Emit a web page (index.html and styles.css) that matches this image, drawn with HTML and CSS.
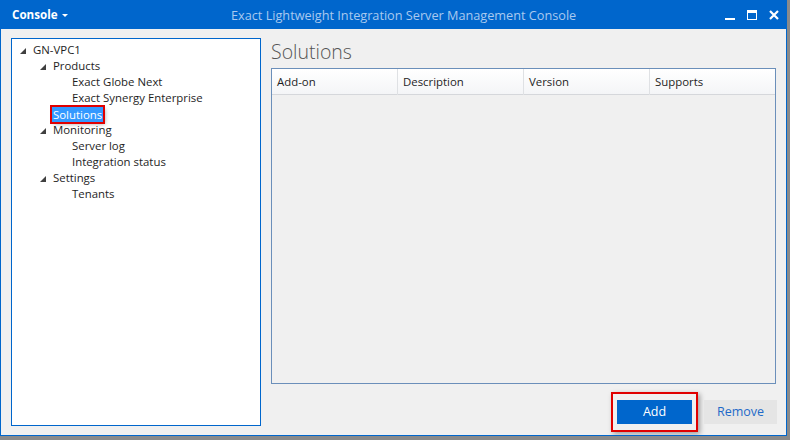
FILE: index.html
```html
<!DOCTYPE html>
<html>
<head>
<meta charset="utf-8">
<link rel="stylesheet" href="styles.css">
</head>
<body>
<div class="window">
  <div class="titlebar">
    <div class="menu">Console <span class="caret"></span></div>
    <div class="title">Exact Lightweight Integration Server Management Console</div>
    <div class="controls">
      <svg width="10" height="10" viewBox="0 0 10 10"><rect x="0" y="8" width="10" height="2" fill="#fff"/></svg>
      <svg width="10" height="10" viewBox="0 0 10 10"><rect x="0.5" y="0.5" width="9" height="9" fill="none" stroke="#fff" stroke-width="1"/><rect x="0" y="0" width="10" height="3" fill="#fff"/></svg>
      <svg width="10" height="10" viewBox="0 0 10 10"><path d="M1 1 L9 9 M9 1 L1 9" stroke="#fff" stroke-width="2.2"/></svg>
    </div>
  </div>
  <div class="body">
    <div class="tree">
      <div class="node l0"><span class="tri"></span>GN-VPC1</div>
      <div class="node l1"><span class="tri"></span>Products</div>
      <div class="node l2">Exact Globe Next</div>
      <div class="node l2">Exact Synergy Enterprise</div>
      <div class="node l1s"><span class="sel">Solutions</span></div>
      <div class="node l1"><span class="tri"></span>Monitoring</div>
      <div class="node l2">Server log</div>
      <div class="node l2">Integration status</div>
      <div class="node l1"><span class="tri"></span>Settings</div>
      <div class="node l2">Tenants</div>
    </div>
    <div class="main">
      <div class="heading">Solutions</div>
      <div class="grid">
        <div class="header">
          <div class="col">Add-on</div>
          <div class="col">Description</div>
          <div class="col">Version</div>
          <div class="col">Supports</div>
        </div>
      </div>
      <div class="buttons">
        <div class="hl"><div class="btn primary">Add</div></div>
        <div class="btn secondary">Remove</div>
      </div>
    </div>
  </div>
</div>
</body>
</html>
```
FILE: styles.css
```css
html, body {
  margin: 0;
  padding: 0;
  background: #8a8a8a;
  width: 790px;
  height: 440px;
  overflow: hidden;
}
body {
  font-family: "Open Sans", "Noto Sans", sans-serif;
  font-size: 11.4px;
}
.window {
  width: 785px;
  height: 435px;
  border: 1px solid #0066cc;
  border-top: none;
  background: #f0f0f0;
  display: flex;
  flex-direction: column;
  overflow: hidden;
}
.titlebar {
  flex-shrink: 0;
  height: 29px;
  background: #0066cc;
  display: flex;
  align-items: center;
  position: relative;
}
.menu {
  color: #fff;
  font-weight: bold;
  font-size: 11.6px;
  padding-left: 11px;
  display: flex;
  align-items: center;
  gap: 4px;
}
.caret {
  width: 0;
  height: 0;
  border-left: 3px solid transparent;
  border-right: 3px solid transparent;
  border-top: 3px solid #fff;
  margin-top: 1px;
}
.title {
  position: absolute;
  left: 230px;
  top: 0;
  line-height: 30px;
  color: #a9c9ef;
  font-size: 12.7px;
}
.controls {
  margin-left: auto;
  display: flex;
  gap: 12px;
  padding-right: 7px;
  align-items: center;
}
.body {
  flex: 1;
  display: flex;
  padding: 9px 10px 10px 10px;
  gap: 10px;
  min-height: 0;
}
.tree {
  width: 248px;
  height: 383px;
  background: #fff;
  border: 1px solid #0066cc;
  padding-top: 3px;
  box-sizing: content-box;
  color: #1e1e1e;
  flex-shrink: 0;
}
.node {
  height: 16px;
  line-height: 16px;
  display: flex;
  align-items: center;
  white-space: nowrap;
}
.l0 { padding-left: 8px; }
.l1 { padding-left: 28px; }
.l1s { padding-left: 40px; }
.l2 { padding-left: 60px; }
.tri {
  width: 0;
  height: 0;
  border-left: 6px solid transparent;
  border-bottom: 6px solid #404040;
  margin-right: 7px;
  margin-top: 1px;
}
.sel {
  background: #3399ff;
  color: #fff;
  outline: 2px solid #e00000;
  padding: 0 1px;
  line-height: 15px;
  box-shadow: 2px 2px 4px rgba(0,0,0,0.35);
}
.main {
  flex: 1;
  display: flex;
  flex-direction: column;
}
.heading {
  flex-shrink: 0;
  font-family: "Open Sans", sans-serif;
  font-weight: 300;
  font-size: 19.5px;
  color: #555;
  height: 30px;
  line-height: 28px;
  padding-left: 0px;
}
.grid {
  flex-shrink: 0;
  width: 503px;
  height: 314px;
  border: 1px solid #6b8fba;
  background: #f0f0f0;
}
.header {
  height: 25px;
  display: grid;
  grid-template-columns: 126px 126px 126px 125px;
  background: linear-gradient(#ffffff, #f4f5f7);
  border-bottom: 1px solid #d5d7db;
}
.col {
  line-height: 26px;
  padding-left: 5px;
  border-right: 1px solid #dfe1e4;
  color: #1e1e1e;
}
.col:last-child { border-right: none; }
.buttons {
  flex-shrink: 0;
  display: flex;
  justify-content: flex-end;
  align-items: center;
  gap: 6px;
  margin-top: 8px;
  width: 506px;
}
.hl {
  border: 2px solid #e00000;
  padding: 6px 4px;
  box-shadow: 2px 2px 5px rgba(0,0,0,0.35);
}
.btn {
  height: 24px;
  line-height: 24px;
  text-align: center;
  font-size: 12.5px;
}
.primary {
  width: 75px;
  background: #0066cc;
  color: #fff;
}
.secondary {
  width: 73px;
  background: #e5e5e5;
  color: #1e6ac8;
}
```
